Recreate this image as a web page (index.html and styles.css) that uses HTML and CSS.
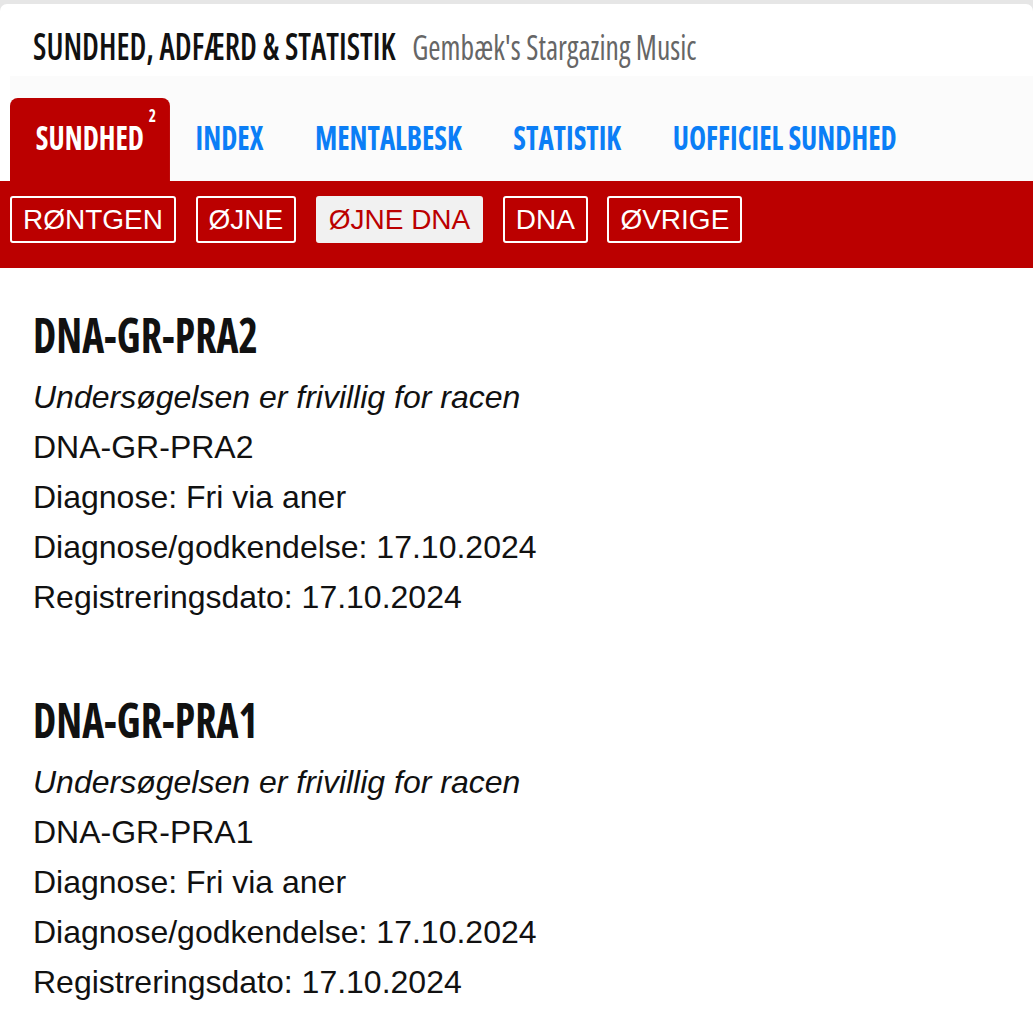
FILE: index.html
```html
<!DOCTYPE html>
<html lang="da">
<head>
  <meta charset="UTF-8">
  <meta name="viewport" content="width=device-width, initial-scale=1.0">
  <title>Sundhed, adfærd &amp; statistik</title>
  <link rel="stylesheet" href="styles.css">
</head>
<body>
  <div class="page">
    <header class="top">
      <div class="brand">
        <span class="brand-title">SUNDHED, ADFÆRD &amp; STATISTIK</span>
        <span class="brand-sub">Gembæk's Stargazing Music</span>
      </div>
    </header>

    <nav class="tabs">
      <ul class="tab-list">
        <li class="tab active"><a href="#">SUNDHED</a><span class="count">2</span></li>
        <li class="tab"><a href="#">INDEX</a></li>
        <li class="tab"><a href="#">MENTALBESK</a></li>
        <li class="tab"><a href="#">STATISTIK</a></li>
        <li class="tab"><a href="#">UOFFICIEL SUNDHED</a></li>
      </ul>
    </nav>

    <div class="subnav">
      <a class="pill" href="#">RØNTGEN</a>
      <a class="pill" href="#">ØJNE</a>
      <a class="pill current" href="#">ØJNE DNA</a>
      <a class="pill" href="#">DNA</a>
      <a class="pill" href="#">ØVRIGE</a>
    </div>

    <main class="content">
      <section class="record">
        <h2><span>DNA-GR-PRA2</span></h2>
        <p class="note">Undersøgelsen er frivillig for racen</p>
        <p>DNA-GR-PRA2</p>
        <p>Diagnose: Fri via aner</p>
        <p>Diagnose/godkendelse: 17.10.2024</p>
        <p>Registreringsdato: 17.10.2024</p>
      </section>

      <section class="record">
        <h2><span>DNA-GR-PRA1</span></h2>
        <p class="note">Undersøgelsen er frivillig for racen</p>
        <p>DNA-GR-PRA1</p>
        <p>Diagnose: Fri via aner</p>
        <p>Diagnose/godkendelse: 17.10.2024</p>
        <p>Registreringsdato: 17.10.2024</p>
      </section>
    </main>
  </div>
</body>
</html>
```

FILE: styles.css
```css
/* narrow display face: condensed Open Sans, squeezed a little more */
:root { --red: #bb0000; --blue: #0b7ef6; --narrow: "Open Sans", sans-serif; }

body { margin: 0; background: #e6e6e6; font-family: "Liberation Sans", Arial, sans-serif; color: #111; }
.page { margin-top: 4px; background: #fff; border-radius: 7px 7px 0 0; min-height: 1027px; }

.top { height: 72px; box-sizing: border-box; padding: 21px 0 0 33px; }
.brand { display: flex; align-items: baseline; gap: 20px; transform: scaleX(0.83); transform-origin: 0 0; white-space: nowrap; }
.brand-title { font-family: var(--narrow); font-stretch: 75%; font-weight: 600; font-size: 38px; line-height: 40px; color: #111; }
.brand-sub { display: inline-block; transform: scaleX(1.05); transform-origin: 0 0; font-family: var(--narrow); font-stretch: 75%; font-size: 34px; line-height: 35px; color: #666; }

.tabs { background: #fbfbfb; margin-left: 10px; padding-top: 22px; }
.tab-list { list-style: none; margin: 0; padding: 0; display: flex; transform: scaleX(0.86); transform-origin: 0 0; white-space: nowrap; }
.tab { position: relative; }
.tab a { display: block; padding: 23px 30px 27px; font-family: var(--narrow); font-stretch: 75%; font-weight: bold; font-size: 33.6px; line-height: 33px; color: var(--blue); text-decoration: none; }
.tab.active { background: var(--red); border-radius: 9px 9px 0 0 / 8px 8px 0 0; }
.tab.active a { color: #fff; }
.count { position: absolute; top: 8px; right: 16px; font-family: var(--narrow); font-stretch: 75%; font-weight: bold; font-size: 18px; line-height: 19px; color: #fff; }

.subnav { background: var(--red); display: flex; gap: 19.5px; padding: 15px 10px 25px; }
.pill { display: block; padding: 0 11px; border: 2px solid #fff; border-radius: 3px; font-size: 28px; line-height: 43px; color: #fff; text-decoration: none; }
.pill.current { background: #f1f1f1; border-color: #f1f1f1; color: var(--red); }

.content { padding: 0 33px; }
.record { padding: 41px 0 31px; }
.record h2 { margin: 0 0 13px; font-family: var(--narrow); font-stretch: 75%; font-weight: bold; font-size: 49px; line-height: 50px; color: #111; }
.record h2 span { display: inline-block; transform: scaleX(0.85); transform-origin: 0 0; }
.record p { margin: 0; font-size: 32px; line-height: 50px; }
.record .note { font-style: italic; }
```
